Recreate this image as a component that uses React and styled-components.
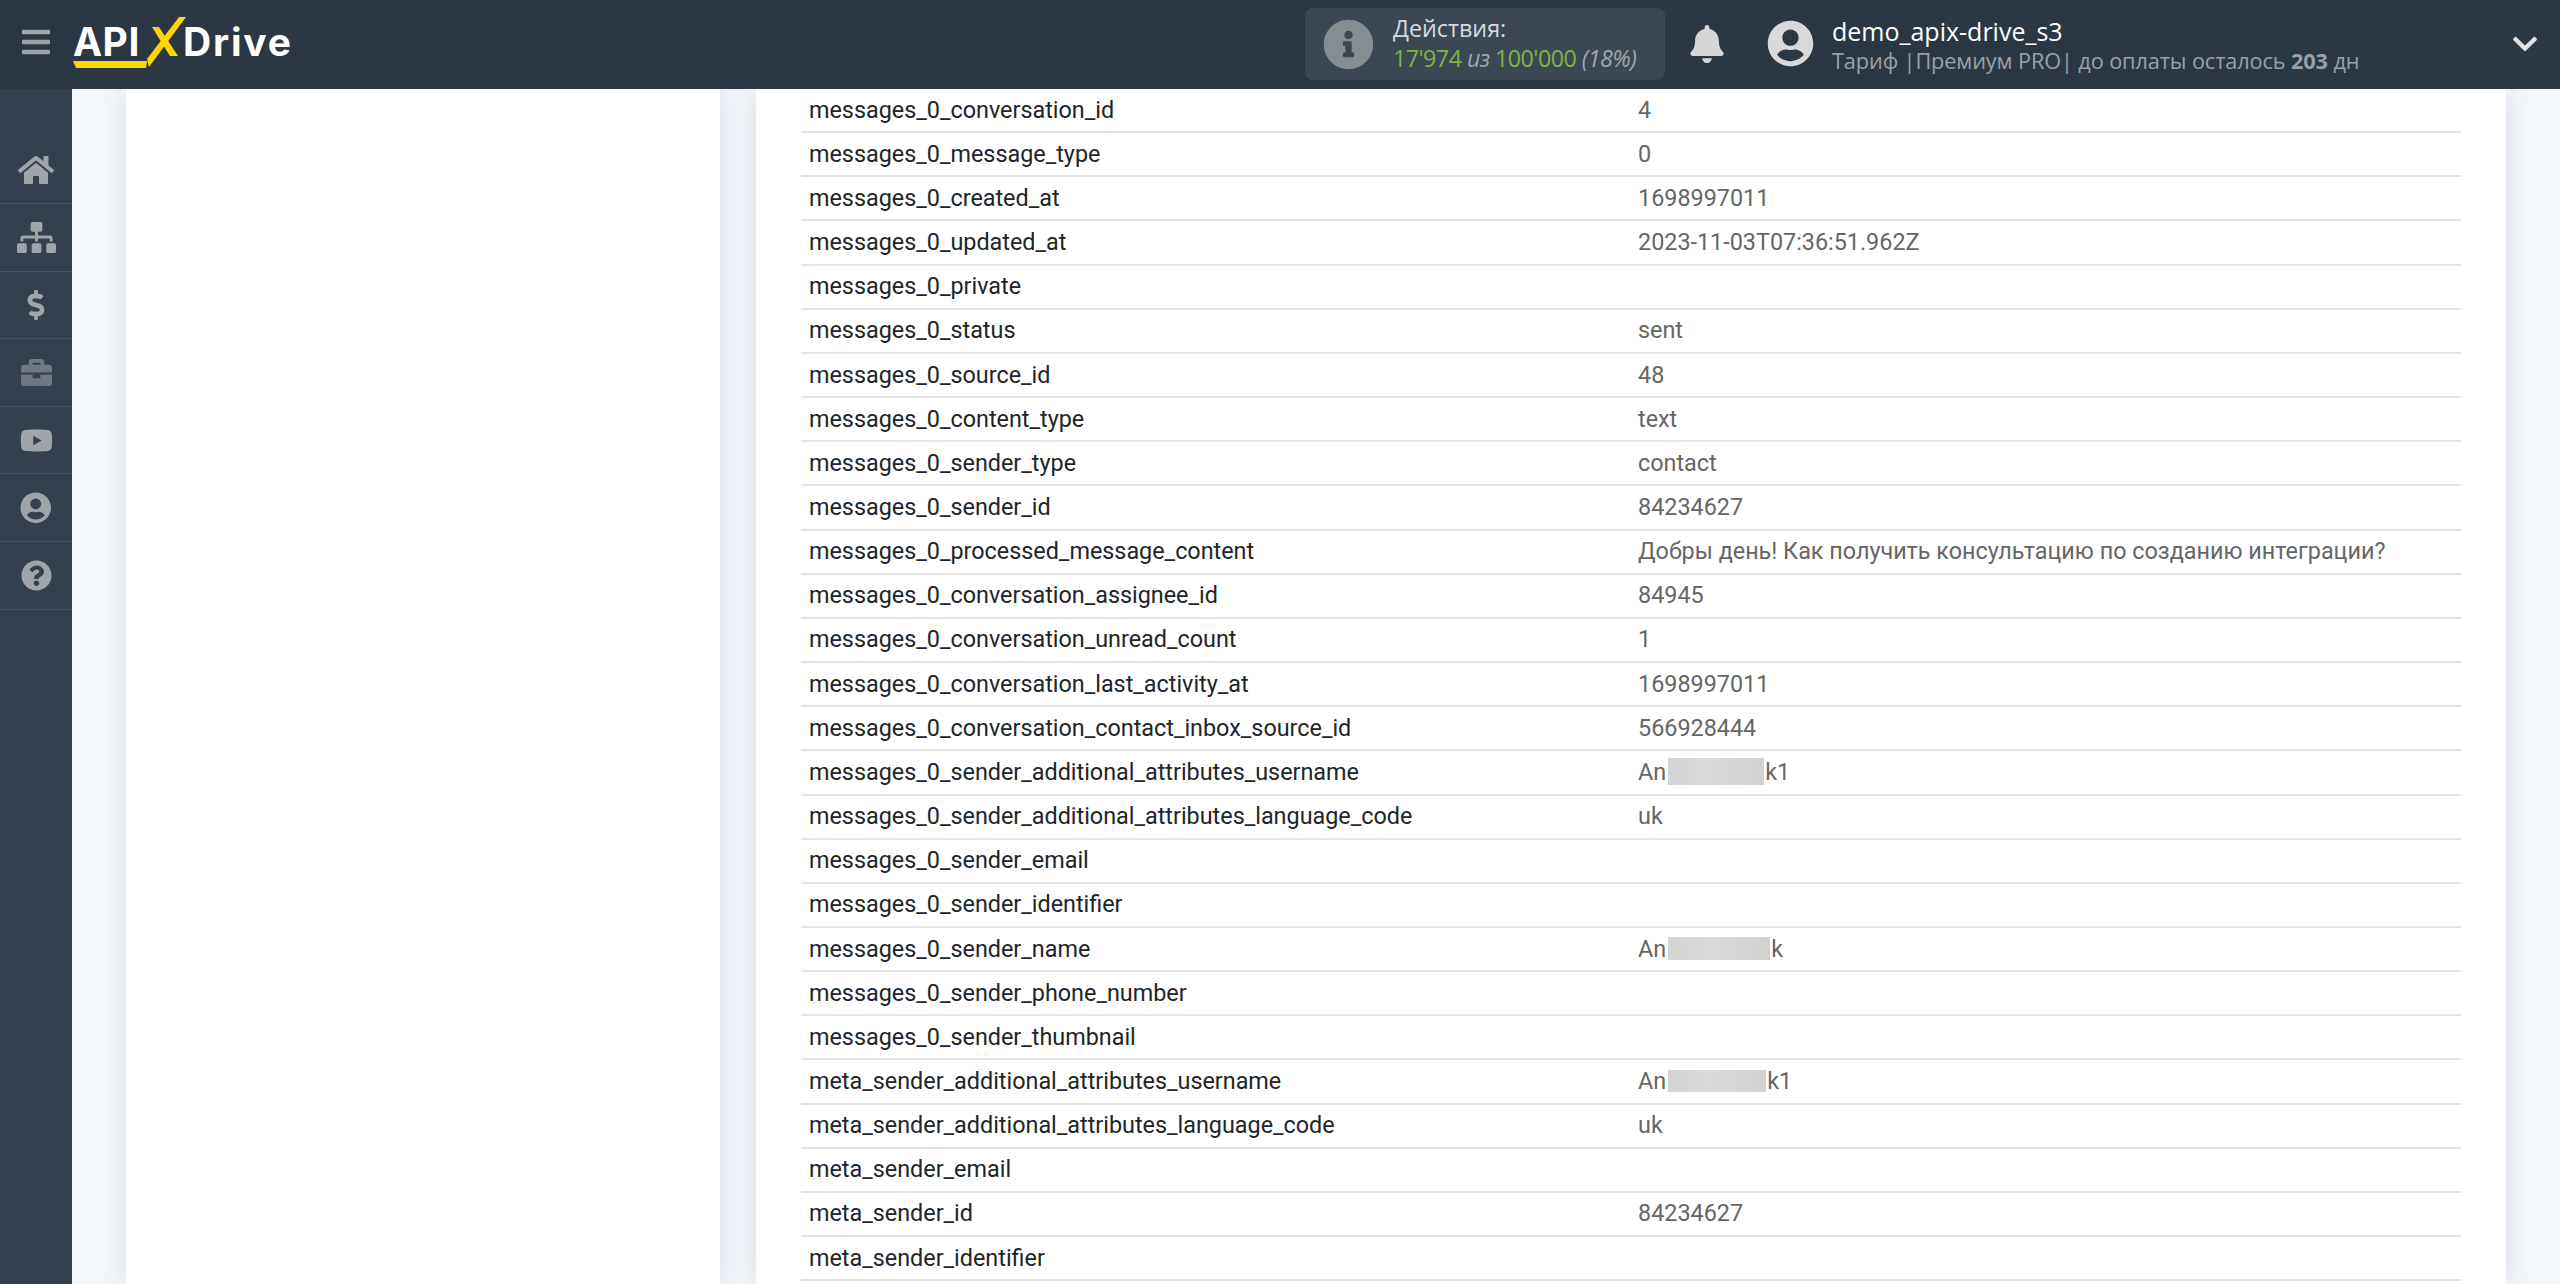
import React from 'react';
import styled, { createGlobalStyle } from 'styled-components';
import {
  FaBars, FaHome, FaSitemap, FaDollarSign, FaBriefcase, FaYoutube,
  FaUserCircle, FaQuestionCircle, FaBell, FaInfoCircle, FaChevronDown,
} from 'react-icons/fa';

const GlobalStyle = createGlobalStyle`
  html, body {
    margin: 0;
    height: 100%;
    overflow: hidden;
    background: #f3f6fb;
    font-family: Roboto, "Liberation Sans", sans-serif;
  }
  * { box-sizing: border-box; }
`;

const Page = styled.div`
  height: 1284px;
  display: grid;
  grid-template-columns: 72px 1fr;
  grid-template-rows: 89px 1fr;
  overflow: hidden;
`;

const Header = styled.header`
  grid-column: 1 / 3;
  background: #2c3744;
  display: flex;
  align-items: center;
  padding-bottom: 2px;
  color: #fff;
`;

const Burger = styled.div`
  width: 72px;
  margin-top: -3px;
  display: flex;
  justify-content: center;
  color: #9da2a7;
  font-size: 32px;
  svg { display: block; }
`;

const Logo = styled.div`
  position: relative;
  align-self: flex-start;
  width: 232px;
  height: 89px;
  display: flex;
  font-family: Inter, sans-serif;
  font-weight: 700;
  font-size: 39px;
  line-height: 42px;
  color: #fff;
  svg { position: absolute; left: 0; top: 0; }
`;

const LogoApi = styled.span`
  margin-left: 1px;
  margin-top: 21px;
  width: 110px;
  letter-spacing: 0.5px;
`;

const LogoDrive = styled.span`
  margin-top: 21px;
  letter-spacing: 1.8px;
`;

const Stats = styled.div`
  margin-left: 1001px;
  margin-top: 1px;
  width: 360px;
  height: 72px;
  background: #3b4853;
  border-radius: 8px;
  display: flex;
  align-items: center;
  padding-left: 18px;
  font-family: "Open Sans", sans-serif;
`;

const StatsIcon = styled.div`
  color: #858c92;
  font-size: 51px;
  display: flex;
  width: 51px;
  svg { display: block; }
`;

const StatsText = styled.div`
  margin-left: 19px;
  margin-top: -3px;
  font-size: 23.3px;
  line-height: 30px;
  color: #d8dadc;
  white-space: nowrap;
`;

const StatsValues = styled.div`
  color: #7db445;
  letter-spacing: -0.55px;
  em { color: #9fa5aa; }
`;

const BellWrap = styled.div`
  margin-left: 23px;
  font-size: 38px;
  color: #d6d6d6;
  display: flex;
  svg { display: block; }
`;

const Avatar = styled.div`
  margin-left: 41px;
  font-size: 47px;
  color: #d9d9d9;
  display: flex;
  svg { display: block; }
`;

const UserInfo = styled.div`
  margin-left: 18px;
  margin-top: 1px;
  font-family: "Open Sans", sans-serif;
  white-space: nowrap;
`;

const UserName = styled.div`
  font-size: 25px;
  line-height: 32px;
  color: #fff;
`;

const UserPlan = styled.div`
  font-size: 21.7px;
  line-height: 27px;
  color: #9aa0a6;
  letter-spacing: -0.1px;
`;

const Chevron = styled.div`
  margin-left: auto;
  margin-right: 21px;
  font-size: 28px;
  color: #e0e0e0;
  display: flex;
  svg { display: block; }
`;

const Sidebar = styled.nav`
  background: #35404e;
  padding-top: 47.4px;
`;

const NavItem = styled.div`
  height: 67.6px;
  border-bottom: 1px solid #4a5460;
  display: flex;
  align-items: center;
  justify-content: center;
  font-size: ${(p) => p.$size}px;
  color: ${(p) => (p.$dim ? '#6f7782' : '#a0a5aa')};
  svg { display: block; }
`;

const Content = styled.main`
  display: grid;
  grid-template-columns: 594px 1750px;
  column-gap: 36px;
  padding-left: 54px;
  background: #f3f6fb;
  overflow: hidden;
`;

const LeftPanel = styled.div`
  background: #fff;
  height: 100%;
  box-shadow: 0 0 26px rgba(40, 50, 70, 0.13);
`;

const Card = styled.div`
  background: #fff;
  height: 100%;
  padding: 0 45px;
  box-shadow: 0 0 26px rgba(40, 50, 70, 0.13);
`;

const Row = styled.div`
  height: 44.17px;
  border-bottom: 2px solid #e2e2e2;
  display: grid;
  grid-template-columns: 829px 1fr;
  align-items: center;
  font-size: 23.36px;
  padding: 0 8px 1px;
`;

const Key = styled.div`
  color: #212529;
`;

const Val = styled.div`
  color: #666;
  display: flex;
  align-items: center;
`;

const Blur = styled.span`
  display: inline-block;
  width: ${(p) => p.$w}px;
  height: ${(p) => p.$h}px;
  margin: 0 1px 0 2px;
  background: linear-gradient(90deg, #d4d4d4, #dadada 40%, #d2d2d2 100%);
`;

const rows = [
  ['messages_0_conversation_id', '4'],
  ['messages_0_message_type', '0'],
  ['messages_0_created_at', '1698997011'],
  ['messages_0_updated_at', '2023-11-03T07:36:51.962Z'],
  ['messages_0_private', ''],
  ['messages_0_status', 'sent'],
  ['messages_0_source_id', '48'],
  ['messages_0_content_type', 'text'],
  ['messages_0_sender_type', 'contact'],
  ['messages_0_sender_id', '84234627'],
  ['messages_0_processed_message_content', 'Добры день! Как получить консультацию по созданию интеграции?'],
  ['messages_0_conversation_assignee_id', '84945'],
  ['messages_0_conversation_unread_count', '1'],
  ['messages_0_conversation_last_activity_at', '1698997011'],
  ['messages_0_conversation_contact_inbox_source_id', '566928444'],
  ['messages_0_sender_additional_attributes_username', <>An<Blur $w={96} $h={27} />k1</>],
  ['messages_0_sender_additional_attributes_language_code', 'uk'],
  ['messages_0_sender_email', ''],
  ['messages_0_sender_identifier', ''],
  ['messages_0_sender_name', <>An<Blur $w={102} $h={23} />k</>],
  ['messages_0_sender_phone_number', ''],
  ['messages_0_sender_thumbnail', ''],
  ['meta_sender_additional_attributes_username', <>An<Blur $w={98} $h={22} />k1</>],
  ['meta_sender_additional_attributes_language_code', 'uk'],
  ['meta_sender_email', ''],
  ['meta_sender_id', '84234627'],
  ['meta_sender_identifier', ''],
];

export default function App() {
  return (
    <Page>
      <GlobalStyle />
      <Header>
        <Burger><FaBars /></Burger>
        <Logo>
          {/* logo mark, placed in page coords minus the 72px burger */}
          <svg width="232" height="89" viewBox="72 0 232 89" aria-label="X">
            <polygon points="73,61 147,61 146,68 76,68" fill="#ffd600" />
            <polygon points="179,17 186,17 149,67 147,59" fill="#ffd600" />
            <polygon points="152,27 159,27 178,56 170,56" fill="#ffd600" />
          </svg>
          <LogoApi>API</LogoApi>
          <LogoDrive>Drive</LogoDrive>
        </Logo>
        <Stats>
          <StatsIcon><FaInfoCircle /></StatsIcon>
          <StatsText>
            Действия:
            <StatsValues>17'974 <em>из</em> 100'000 <em>(18%)</em></StatsValues>
          </StatsText>
        </Stats>
        <BellWrap><FaBell /></BellWrap>
        <Avatar><FaUserCircle /></Avatar>
        <UserInfo>
          <UserName>demo_apix-drive_s3</UserName>
          <UserPlan>Тариф |Премиум PRO| до оплаты осталось <b>203</b> дн</UserPlan>
        </UserInfo>
        <Chevron><FaChevronDown /></Chevron>
      </Header>
      <Sidebar>
        <NavItem $size={36}><FaHome /></NavItem>
        <NavItem $size={39}><FaSitemap /></NavItem>
        <NavItem $size={30}><FaDollarSign /></NavItem>
        <NavItem $size={31} $dim><FaBriefcase /></NavItem>
        <NavItem $size={33}><FaYoutube /></NavItem>
        <NavItem $size={31.5}><FaUserCircle /></NavItem>
        <NavItem $size={31}><FaQuestionCircle /></NavItem>
      </Sidebar>
      <Content>
        <LeftPanel />
        <Card>
          {rows.map(([k, v]) => (
            <Row key={k}>
              <Key>{k}</Key>
              <Val>{v}</Val>
            </Row>
          ))}
        </Card>
      </Content>
    </Page>
  );
}
